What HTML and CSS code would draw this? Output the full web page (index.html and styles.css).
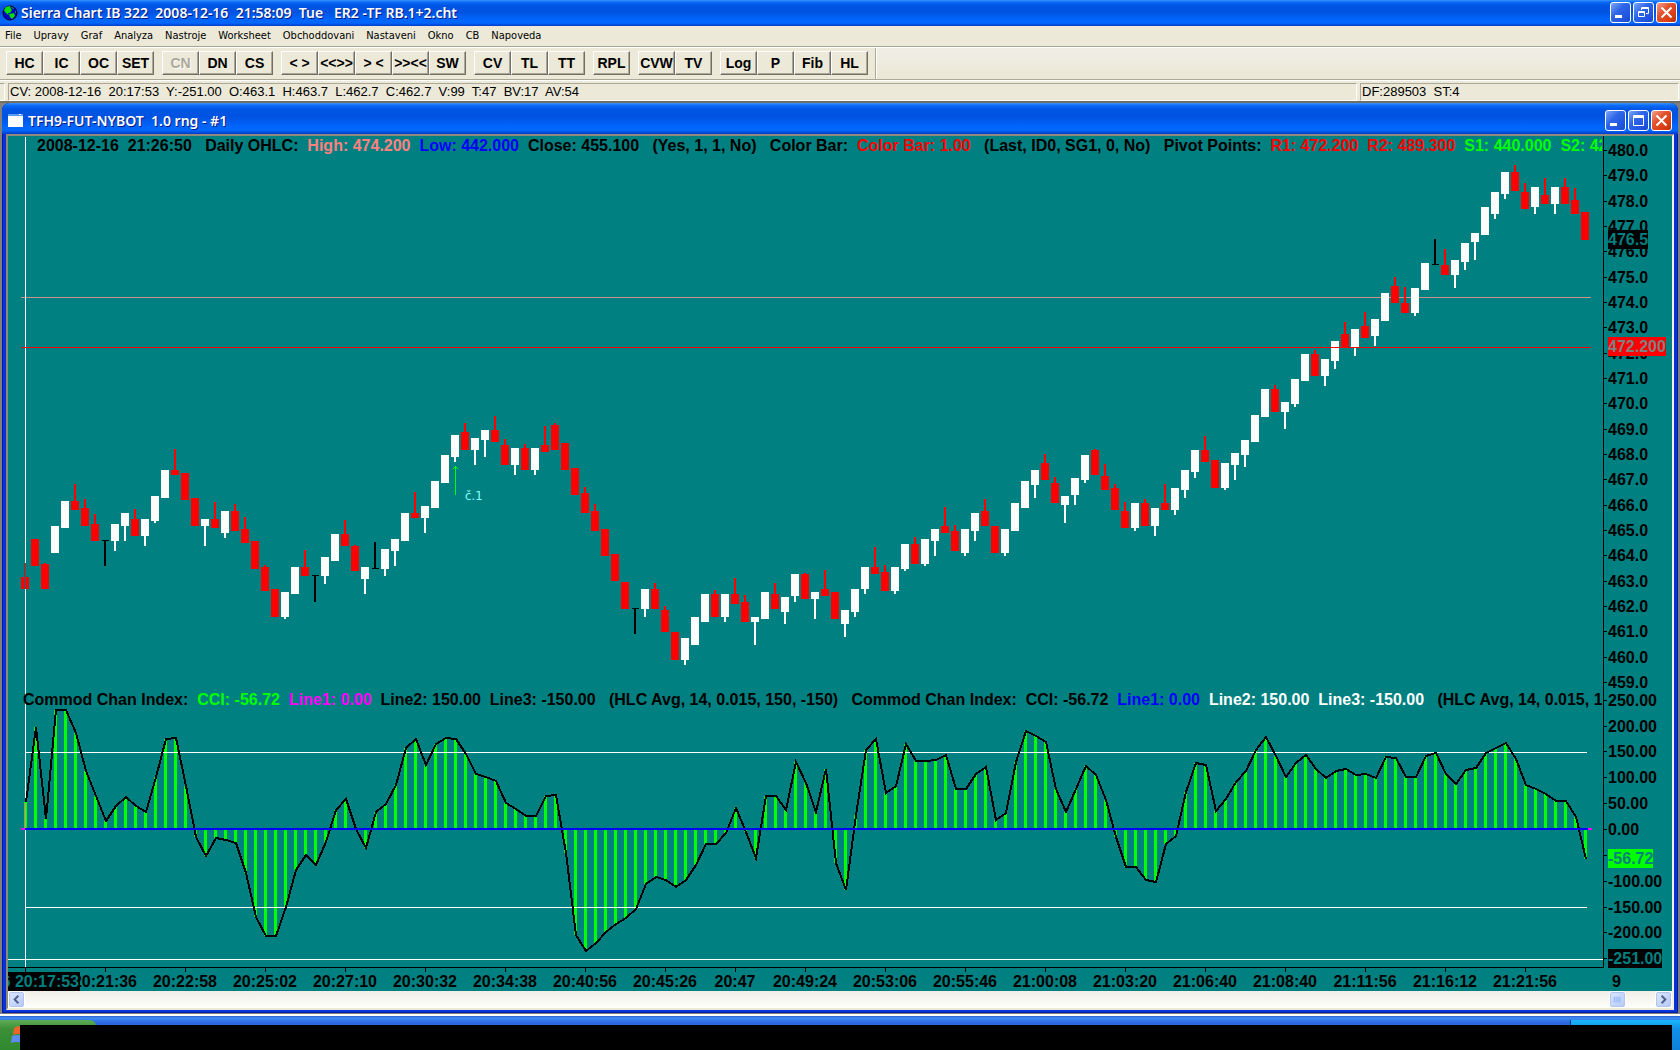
FILE: index.html
```html
<!DOCTYPE html>
<html lang="cs">
<head>
    <meta charset="UTF-8">
    <meta name="viewport" content="width=device-width, initial-scale=1.0">
    <title>Sierra Chart IB 322</title>
    <link rel="stylesheet" href="styles.css">
</head>
<body>
    <header class="titlebar">
        <svg class="globe" viewBox="0 0 16 16" aria-hidden="true">
            <circle cx="8" cy="8" r="7" fill="#0000c8" stroke="#000020"/>
            <path d="M2 5 L4 2 L8 1 L9 4 L10 5 L8 8 L6 8 L7 10 L5 9 L3 7 Z M9 2 L12 3 L11 4 Z M7 9 L12 8 L13 11 L10 14 L8 12 Z M13 5 L14 8 L13 8 Z" fill="#00e000"/>
        </svg>
        <h1 class="caption">Sierra Chart IB 322  2008-12-16  21:58:09  Tue   ER2 -TF RB.1+2.cht</h1>
        <div class="winbuttons">
            <button class="winbtn" aria-label="Minimalizovat"><svg viewBox="0 0 19 19"><path d="M4 12h7v3H4z" fill="#fff"/></svg></button>
            <button class="winbtn" aria-label="Obnovit"><svg viewBox="0 0 19 19"><path d="M7.500 7V4.500H14.500V10.500H12M7 5.500H15M4.500 8.500h6v5h-6zM4 9.500h7" fill="none" stroke="#fff"/></svg></button>
            <button class="winbtn close" aria-label="Zavřít"><svg viewBox="0 0 19 19"><path d="M4.500 4.500l10 10M14.500 4.500l-10 10" stroke="#fff" stroke-width="2"/></svg></button>
        </div>
    </header>

    <nav class="menu">
        <button>File</button>
        <button>Upravy</button>
        <button>Graf</button>
        <button>Analyza</button>
        <button>Nastroje</button>
        <button>Worksheet</button>
        <button>Obchoddovani</button>
        <button>Nastaveni</button>
        <button>Okno</button>
        <button>CB</button>
        <button>Napoveda</button>
    </nav>

    <div class="toolbar">
        <div class="groups">
            <div class="group"><button>HC</button><button>IC</button><button>OC</button><button>SET</button></div>
            <div class="group"><button disabled>CN</button><button>DN</button><button>CS</button></div>
            <div class="group"><button>&lt; &gt;</button><button>&lt;&lt;&gt;&gt;</button><button>&gt; &lt;</button><button>&gt;&gt;&lt;&lt;</button><button>SW</button></div>
            <div class="group"><button>CV</button><button>TL</button><button>TT</button></div>
            <div class="group"><button>RPL</button></div>
            <div class="group"><button>CVW</button><button>TV</button></div>
            <div class="group"><button>Log</button><button>P</button><button>Fib</button><button>HL</button></div>
        </div>
    </div>

    <div class="status">
        <div class="grip"></div>
        <div class="panel values">CV: 2008-12-16  20:17:53  Y:-251.00  O:463.1  H:463.7  L:462.7  C:462.7  V:99  T:47  BV:17  AV:54</div>
        <div class="panel feed">DF:289503  ST:4</div>
    </div>

    <main class="desk">
        <section class="child">
            <div class="child-title">
                <svg class="doc" viewBox="0 0 15 13" aria-hidden="true">
                    <rect width="15" height="13" fill="#fff"/>
                    <rect width="15" height="2" fill="#5a9cf0"/>
                    <rect x="11" width="2" height="1" fill="#fff"/>
                </svg>
                <h2 class="caption">TFH9-FUT-NYBOT  1.0 rng - #1</h2>
                <div class="winbuttons">
                    <button class="winbtn" aria-label="Minimalizovat"><svg viewBox="0 0 19 19"><path d="M4 12h7v3H4z" fill="#fff"/></svg></button>
                    <button class="winbtn" aria-label="Maximalizovat"><svg viewBox="0 0 19 19"><path d="M4.500 4.500h10v10h-10zM4 5.500h11M4 6.500h11" fill="none" stroke="#fff"/></svg></button>
                    <button class="winbtn close" aria-label="Zavřít"><svg viewBox="0 0 19 19"><path d="M4.500 4.500l10 10M14.500 4.500l-10 10" stroke="#fff" stroke-width="2"/></svg></button>
                </div>
            </div>

            <div class="client">
                <div class="chart">
                    <svg id="chart" viewBox="0 0 1664 855"></svg>
                    <div class="legend legend-price"><span>2008-12-16  21:26:50</span>   <span>Daily OHLC:</span>  <span class="pink">High: 474.200</span>  <span class="blue">Low: 442.000</span>  <span>Close: 455.100</span>   <span>(Yes, 1, 1, No)</span>   <span>Color Bar:</span>  <span class="red">Color Bar: 1.00</span>   <span>(Last, ID0, SG1, 0, No)</span>   <span>Pivot Points:</span>  <span class="red">R1: 472.200</span>  <span class="red">R2: 489.300</span>  <span class="lime">S1: 440.000</span>  <span class="lime">S2: 422.900</span></div>
                    <div class="legend legend-cci"><span>Commod Chan Index:</span>  <span class="lime">CCI: -56.72</span>  <span class="magenta">Line1: 0.00</span>  <span>Line2: 150.00</span>  <span>Line3: -150.00</span>   <span>(HLC Avg, 14, 0.015, 150, -150)</span>   <span>Commod Chan Index:</span>  <span>CCI: -56.72</span>  <span class="blue">Line1: 0.00</span>  <span class="white">Line2: 150.00</span>  <span class="white">Line3: -150.00</span>   <span>(HLC Avg, 14, 0.015, 150, -150)</span></div>
                </div>
                <div class="scrollbar">
                    <button aria-label="Doleva"><svg viewBox="0 0 16 16"><path d="M10 4L6 8l4 4" fill="none" stroke="#4d6185" stroke-width="2"/></svg></button>
                    <button class="thumb" aria-label="Posuvník"><svg viewBox="0 0 16 16"><path d="M4.500 5v6M6.500 5v6M8.500 5v6M10.500 5v6" stroke="#8cb0f8"/></svg></button>
                    <button aria-label="Doprava"><svg viewBox="0 0 16 16"><path d="M6 4l4 4-4 4" fill="none" stroke="#4d6185" stroke-width="2"/></svg></button>
                </div>
            </div>
        </section>
    </main>

    <footer class="taskbar">
        <div class="start">
            <svg viewBox="0 0 12 20" aria-hidden="true">
                <path d="M4 3Q8 0 12 2V9Q7 8 3 10Z" fill="#f0642c"/>
                <path d="M2 11Q7 9 12 11V18Q6 16 1 18Z" fill="#5f8cf0"/>
            </svg>
        </div>
        <div class="tray"></div>
        <div class="cover"></div>
    </footer>

    <script src="chart.js"></script>
</body>
</html>
```
FILE: styles.css
```css
* {
    box-sizing: border-box;
}

body {
    margin: 0;
    min-height: 100vh;
    display: flex;
    flex-direction: column;
    background-color: #ece9d8;
    font-family: "DejaVu Sans Condensed", Tahoma, sans-serif;
    font-size: 11px;
    color: #000;
}

button {
    padding: 0;
    border: none;
    background: none;
    font: inherit;
    color: inherit;
}

svg {
    display: block;
}

/* title bars */
.titlebar,
.child-title {
    display: flex;
    align-items: center;
    background: linear-gradient(#3a93ff 0, #0a6cf8 8%, #0055e5 20%, #0053e0 45%, #0065fc 75%, #0068ff 88%, #003cc8 100%);
}

.titlebar {
    height: 26px;
    padding: 0 3px 1px 2px;
}

.globe {
    width: 16px;
    height: 16px;
    margin-right: 3px;
}

.caption {
    flex: 1;
    margin: 0;
    font-family: "Noto Sans", "Trebuchet MS", sans-serif;
    font-size: 14px;
    font-weight: 600;
    line-height: 16px;
    white-space: pre;
    color: #fff;
    text-shadow: 1px 1px 0 #0a1883;
}

.winbuttons {
    display: flex;
    gap: 2px;
}

.winbtn {
    width: 21px;
    height: 21px;
    border: 1px solid #fff;
    border-radius: 3px;
    background: linear-gradient(135deg, #7ba5f5 0, #2f66e8 40%, #2156e0 75%, #1a48c8 100%);
}

.winbtn svg {
    width: 19px;
    height: 19px;
}

.winbtn.close {
    background: linear-gradient(135deg, #f0a08a 0, #e2512c 40%, #da3e12 75%, #b43008 100%);
}

/* menu */
.menu {
    display: flex;
    gap: 12px;
    height: 21px;
    padding-left: 5px;
    border-bottom: 1px solid #aca899;
}

.menu button {
    padding-bottom: 2px;
}

/* toolbar */
.toolbar {
    display: flex;
    height: 33px;
    border-top: 1px solid #fff;
    border-bottom: 1px solid #aca899;
    background: linear-gradient(#f0efe6, #ebe7d5);
}

.groups {
    display: flex;
    gap: 8px;
    padding: 3px 7px 0 6px;
    background-color: #ece9d8;
    border-right: 1px solid #aca899;
    box-shadow: 1px 0 0 #fff;
}

.group {
    display: flex;
}

.group button {
    width: 37px;
    height: 24px;
    background-color: #ece9d8;
    border: 1px solid;
    border-color: #fff #716f64 #716f64 #fff;
    box-shadow: inset -1px -1px 0 #aca899;
    font-family: "Liberation Sans", Arial, sans-serif;
    font-size: 14px;
    font-weight: bold;
    line-height: 16px;
    white-space: nowrap;
}

.group button:disabled {
    color: #aca899;
    text-shadow: 1px 1px 0 #fff;
}

/* status line */
.status {
    display: flex;
    gap: 3px;
    height: 23px;
    padding: 2px 1px 0 0;
    border-top: 1px solid #fff;
    border-bottom: 2px solid #716f64;
}

.grip,
.panel {
    height: 18px;
    border: 1px solid;
    border-color: #aca899 #fff #fff #aca899;
}

.grip {
    width: 5px;
    border-left: none;
}

.panel {
    padding-left: 1px;
    font-family: "Liberation Sans", Arial, sans-serif;
    font-size: 13px;
    line-height: 16px;
    white-space: pre;
    overflow: hidden;
}

.values {
    flex: 1;
}

.feed {
    width: 319px;
}

/* chart window */
.desk {
    padding: 0 2px 1px;
    background-color: #808080;
    border-bottom: 2px solid #fff;
}

.child {
    background-color: #0831d9;
    border-radius: 8px 8px 0 0;
    padding: 0 4px 3px;
    box-shadow: inset 1px 0 0 #001ea0, inset -1px -1px 0 #001ea0;
}

.child-title {
    height: 31px;
    margin: 0 -4px;
    padding: 4px 6px 0;
    border-radius: 8px 8px 0 0;
}

.doc {
    width: 15px;
    height: 13px;
    margin-right: 5px;
}

.client {
    border: 2px solid;
    border-color: #8f8b7c #f4f2e8 #ece9d8 #8f8b7c;
}

.chart {
    position: relative;
    background-color: #008080;
}

#chart {
    width: 100%;
    height: auto;
    font-family: "Liberation Sans", Arial, sans-serif;
    font-size: 16px;
    font-weight: bold;
    shape-rendering: crispEdges;
}

#chart .note {
    font-family: "DejaVu Sans Condensed", Tahoma, sans-serif;
    font-size: 13px;
    font-weight: normal;
}

/* study values written over the plot */
.legend {
    position: absolute;
    right: 70px;
    overflow: hidden;
    font-family: "Liberation Sans", Arial, sans-serif;
    font-size: 16px;
    font-weight: bold;
    line-height: 20px;
    white-space: pre;
}

.legend-price {
    top: 0;
    left: 29px;
}

.legend-cci {
    top: 65%;
    left: 15px;
    margin-top: -2px;
}

.pink { color: #ff8080; }
.blue { color: #0000ff; }
.red { color: #ff0000; }
.lime { color: #00ff00; }
.magenta { color: #ff00ff; }
.white { color: #fff; }

.scrollbar {
    display: flex;
    height: 17px;
    background: linear-gradient(#f0eee6, #fefefb);
}

.scrollbar button {
    width: 17px;
    height: 17px;
    border: 1px solid #fff;
    border-radius: 3px;
    background: linear-gradient(135deg, #dce7ff, #b4c8f8);
    box-shadow: inset 0 0 0 1px #b0c4f0;
}

.scrollbar .thumb {
    margin-left: auto;
    margin-right: 29px;
}

/* taskbar */
.taskbar {
    position: relative;
    flex: 1;
    min-height: 34px;
    display: flex;
    align-items: stretch;
    justify-content: space-between;
    background: linear-gradient(#2a5fd0 0, #3f8cf3 2px, #2a66e0 7px, #3a80f0 100%);
}

.start {
    width: 97px;
    margin-top: 4px;
    padding: 5px 0 0 10px;
    border-radius: 0 8px 0 0;
    background: linear-gradient(#5eac56, #3c8f38 30%, #2f8a2f);
}

.start svg {
    width: 12px;
    height: 20px;
}

.tray {
    width: 110px;
    margin-top: 4px;
    border-left: 1px solid #083a80;
    background: linear-gradient(#18b8f8, #1290e8 30%, #0f80d8);
}

/* black strip on top of the task buttons */
.cover {
    position: absolute;
    top: 9px;
    right: 8px;
    bottom: 0;
    left: 20px;
    background-color: #000;
}
```
FILE: chart.js
```js
var chart = document.getElementById("chart");

// r = down bar, w = up bar, k = doji; body top, body bottom, end of wick
var bars = [
    "r441,453,427", "r403,430", "r428,453,427", "w390,417", "w365,392", "r365,374,348", "r372,390,363", "r388,405,378", "k404,404,430", "w388,405,415",
    "w377,390,405", "r383,400,373", "w383,400,410", "w360,385,387", "w334,362", "r334,339,313", "r337,364", "r362,390", "w383,390,410", "r383,392,366",
    "w375,397,402", "r375,395,368", "r393,407,381", "r405,433", "r431,455,429", "r453,481", "w456,481,483", "w431,458", "r431,440,414", "k439,439,466",
    "w421,440,448", "w398,425", "r398,410,384", "r410,435,409", "w431,443,458", "k432,432,406", "w413,433,440", "w403,415,430", "w377,405", "r377,382,356",
    "w370,382,397", "w345,372", "w319,347", "w299,321,326", "r296,314,287", "w302,314,329", "w294,304,321", "r294,306,280", "r309,329,303", "w312,329,339",
    "r312,334,308", "w312,334,339", "r309,316,290", "r289,314,287", "r307,334", "r332,359", "r357,377,351", "r375,395,368", "r393,420", "r418,445",
    "r446,473", "k472,472,498", "w453,473,481", "r453,473,447", "r474,496,470", "r496,524", "w502,524,529", "w481,509", "w458,486", "r458,481,454",
    "w458,481,486", "r458,468,442", "r466,486,459", "w481,486,509", "w456,483", "r458,473,447", "w461,476,488", "w438,460,466", "r438,463,437", "w456,463,483",
    "r453,460,434", "r456,483", "w474,488,501", "w453,476,481", "w431,453,458", "r431,438,411", "r436,455,429", "w431,455,458", "w408,433,435", "r408,428,401",
    "w403,428,430", "w393,405,420", "r390,397,371", "r395,415,389", "w393,417,420", "w377,395,405", "r375,390,363", "r390,417", "w393,417,420", "w367,395",
    "w345,372", "w334,349,362", "r327,344,318", "r347,367,341", "w360,369,387", "w342,359,369", "w319,344,347", "r314,339,313", "r340,354,328", "r352,374,348",
    "r375,392,366", "w367,392,395", "r367,390,363", "w372,390,400", "r367,374,348", "w352,374,379", "w334,354,362", "w314,336,342", "r314,326,300", "r324,352",
    "w327,352,354", "w317,329,344", "w304,319,331", "w279,306", "w253,281", "r253,276,249", "w266,276,293", "w243,268,271", "w218,245", "r218,240,214",
    "w223,240,250", "w205,225,233", "r198,212,186", "w193,211,220", "r190,202,176", "w183,200,210", "w157,185", "r150,167,141", "r167,177,151", "w152,177,180",
    "w127,154", "k128,128,103", "r129,139,113", "w124,139,152", "w107,126,134", "w97,106,124", "w71,99", "w56,78,83", "w36,58,63", "r36,55,29",
    "r56,73,47", "w51,71,78", "r59,68,42", "w51,68,78", "r51,68,42", "r64,78,52", "r76,104"
];

var cci = [
    666, 591, 683, 574, 574, 597, 635, 660, 685, 670, 661, 670, 676, 641, 603, 602, 650, 701, 720, 702,
    704, 707, 737, 781, 800, 800, 771, 734, 719, 729, 706, 674, 663, 693, 712, 676, 668, 649, 612, 603,
    629, 608, 602, 603, 618, 638, 641, 645, 667, 673, 680, 680, 660, 659, 717, 799, 815, 807, 796, 788,
    782, 773, 748, 741, 744, 751, 744, 729, 708, 708, 697, 672, 696, 722, 660, 660, 674, 626, 647, 676,
    633, 727, 754, 679, 614, 603, 657, 650, 608, 625, 625, 624, 619, 653, 653, 638, 631, 684, 677, 626,
    595, 600, 606, 653, 676, 653, 630, 639, 664, 701, 731, 731, 744, 746, 708, 700, 656, 627, 629, 675,
    663, 646, 635, 614, 601, 620, 641, 627, 619, 633, 642, 635, 633, 639, 638, 642, 621, 622, 641, 641,
    620, 617, 638, 648, 634, 632, 617, 612, 607, 623, 649, 653, 658, 665, 665, 681, 723
];

// bar number under each time label
var times = [
    [8, "20:21:36"], [16, "20:22:58"], [24, "20:25:02"], [32, "20:27:10"], [40, "20:30:32"], [48, "20:34:38"],
    [56, "20:40:56"], [64, "20:45:26"], [71, "20:47"], [78, "20:49:24"], [86, "20:53:06"], [94, "20:55:46"],
    [102, "21:00:08"], [110, "21:03:20"], [118, "21:06:40"], [126, "21:08:40"], [134, "21:11:56"],
    [142, "21:16:12"], [150, "21:21:56"]
];

var colors = { r: "#ff0000", w: "#ffffff", k: "#000000" };
var out = "";

function rect(x, y, w, h, fill) {
    out += '<rect x="' + x + '" y="' + y + '" width="' + w + '" height="' + h + '" fill="' + fill + '"/>';
}

function text(x, y, value, fill, anchor) {
    out += '<text x="' + x + '" y="' + y + '" fill="' + (fill || "#000") + '" text-anchor="' + (anchor || "start") + '">' + value + '</text>';
}

function tag(x, y, w, value, back, fore) {
    rect(x, y, w, 19, back);
    text(x, y + 15, value, fore);
}

// daily high and cursor
rect(13, 161, 1570, 1, "#d09090");
rect(17, 1, 1, 830, "#fff");

// candles
bars.forEach(function(item, i) {
    var type = item[0];
    var v = item.slice(1).split(",").map(Number);
    var x = i * 10 + 17;
    if (type === "k") {
        rect(x - 3, v[0], 7, 1, colors.k);
    } else {
        rect(x - 4, v[0], 8, v[1] - v[0], colors[type]);
    }
    if (v.length === 3) {
        rect(x - 1, Math.min(v[0], v[2]), 2, Math.abs(v[2] - v[0]), colors[type]);
    }
});
rect(17, 427, 1, 26, "#007070");
rect(13, 211, 1570, 1, "#ff0000");

// entry mark
out += '<path d="M447.5 359V330M445 333L447.5 330.5L450 333" fill="none" stroke="#00ff00"/>';
out += '<text class="note" x="457" y="364" fill="#80ffff">č.1</text>';

// CCI histogram and line
cci.forEach(function(y, i) {
    rect(i * 10 + 16, Math.min(y, 693), 3, Math.abs(y - 693), "#00ff00");
});
rect(17, 616, 1562, 1, "#fff");
rect(17, 771, 1562, 1, "#fff");
out += '<polyline fill="none" stroke="#000" stroke-width="2" points="' + cci.map(function(y, i) {
    return (i * 10 + 18) + "," + y;
}).join(" ") + '"/>';
rect(13, 692, 1571, 2, "#ff00ff");
rect(17, 692, 1563, 2, "#0000ff");
rect(17, 667, 1, 25, "#ff8080");
rect(0, 823, 1595, 1, "#fff");

// scales
rect(1595, 0, 1, 832, "#000");
rect(0, 831, 1596, 1, "#000");
for (var p = 480; p >= 459; p--) {
    var py = Math.round(14 + (480 - p) * 25.33);
    rect(1596, py, 3, 1, "#000");
    text(1600, py + 6, p.toFixed(1));
}
for (var c = 250; c >= -250; c -= 50) {
    var cy = Math.round(693 - c * 0.517);
    rect(1596, cy, 3, 1, "#000");
    // -50 and -250 lie under the value tags
    if (c !== -50 && c !== -250) {
        text(1600, cy + 6, c.toFixed(2));
    }
}
times.forEach(function(t) {
    var x = t[0] * 10 + 17;
    rect(x, 832, 1, 4, "#000");
    text(x, 851, t[1], "#000", "middle");
});
rect(17, 832, 1, 4, "#000");
text(1604, 851, "9");

tag(1600, 94, 40, "476.5", "#000", "#008080");
tag(1600, 201, 58, "472.200", "#ff0000", "#808080");
tag(1600, 713, 45, "-56.72", "#00ff00", "#008080");
tag(1600, 813, 54, "-251.00", "#000", "#008080");
rect(0, 836, 72, 19, "#000");
text(71, 851, "6 20:17:53", "#008080", "end");

chart.innerHTML = out;
```
